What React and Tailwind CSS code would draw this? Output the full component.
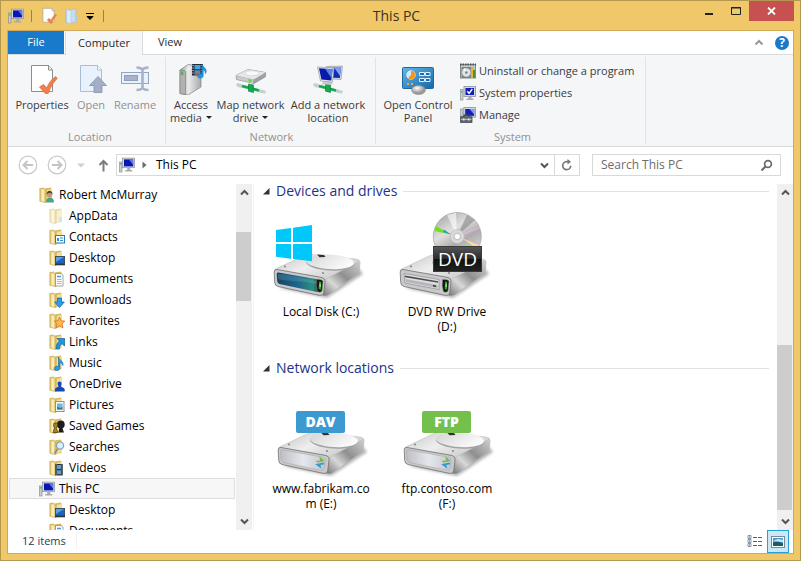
import React, { useState } from "react";

/* ---------- small icons ---------- */

function PcIcon() {
  return (
    <svg width="16" height="16" viewBox="0 0 16 16" className="shrink-0">
      <rect x="0.5" y="5" width="2.5" height="10" fill="#c9ced2" stroke="#80878c" strokeWidth="0.6" />
      <rect x="1.2" y="6" width="1.4" height="1.6" fill="#2fd02f" />
      <rect x="3.6" y="1.1" width="12" height="9.6" fill="#d5d9de" stroke="#8a9198" strokeWidth="0.7" />
      <rect x="5" y="2.4" width="9.2" height="7" fill="#0a15b4" />
      <path d="M10 2.4h4.2v5.5z" fill="#5d7bea" />
      <path d="M8.2 11h3v2h2v1.6H6.2V13h2z" fill="#a5abb1" />
    </svg>
  );
}

function SheetCheck({ size }) {
  return (
    <svg width={size} height={size} viewBox="0 0 32 32" className="shrink-0">
      <path d="M5.5 2.5h17l4 4v22h-21z" fill="#fff" stroke="#8d8d8d" />
      <path d="M22.5 2.5v4.500h4" fill="#eef0f1" stroke="#8d8d8d" />
      <path d="M13.500 24l4-2.600 3.200 3.400c2-4.700 4.600-8.400 9-11.300l1.500 1.900c-4.400 4.500-6.800 9-9 15h-3z" fill="#f07f4e" stroke="#dd6a3a" strokeWidth="0.7" />
    </svg>
  );
}

function BlueFolder() {
  return (
    <svg width="16" height="16" viewBox="0 0 16 16" className="shrink-0">
      <path d="M2 1h6.500v14H2z" fill="#a9c4e2" />
      <path d="M7.500 1.500l5.500-.5V14l-5.500 1z" fill="#c6dcf2" stroke="#9bb9da" strokeWidth="0.6" />
      <path d="M12 7l2.500-.5V14H12z" fill="#b3cce6" />
      <path d="M3.500 1.500L8 2.500v13l-4.500-1z" fill="#dbe9f8" stroke="#a9c4e2" strokeWidth="0.5" />
    </svg>
  );
}

function OpenIcon() {
  return (
    <svg width="32" height="32" viewBox="0 0 32 32">
      <path d="M5.500 2.500h17l4 4v22h-21z" fill="#e9f2fc" stroke="#a9bcd8" />
      <path d="M22.500 2.500v4.500h4" fill="#fff" stroke="#a9bcd8" />
      <path d="M23 13.500l8.500 9h-4.500v7h-8v-7h-4.500z" fill="#a2afc6" stroke="#8393b0" strokeWidth="0.8" />
    </svg>
  );
}

function RenameIcon() {
  return (
    <svg width="32" height="32" viewBox="0 0 32 32">
      <rect x="2.500" y="9.500" width="27" height="11" fill="#e9f2fc" stroke="#92a5c2" />
      <rect x="5.500" y="12.500" width="13" height="5" fill="#a7b3c8" stroke="#8fa0bd" />
      <path d="M17.500 4.500c3 0 4.500.6 6 1.800 1.500-1.200 3-1.800 6-1.800M23.500 5.500v20M17.500 27c3 0 4.500-.6 6-1.800 1.500 1.200 3 1.800 6 1.800" fill="none" stroke="#a5b2c9" strokeWidth="2.600" />
    </svg>
  );
}

function AccessMediaIcon() {
  return (
    <svg width="32" height="32" viewBox="0 0 32 32">
      <defs>
        <linearGradient id="tower" x1="0" x2="1">
          <stop offset="0" stopColor="#9a9a9a" />
          <stop offset="0.4" stopColor="#eaeaea" />
          <stop offset="1" stopColor="#a9a9a9" />
        </linearGradient>
      </defs>
      <path d="M5 7l8-5.500 13 1.500v21l-13 8-8-1.500z" fill="url(#tower)" stroke="#858585" strokeWidth="0.7" />
      <path d="M5 7l5.500.8V31.500l-5.500-1z" fill="#b2b2b2" stroke="#777" strokeWidth="0.6" />
      <path d="M10.500 7.800l10-5.800 5.500 1" fill="none" stroke="#f5f5f5" />
      <path d="M6.200 8.500l2 .3v3l-2-.3z" fill="#1f8f1f" />
      <path d="M6.700 9.200l1 .1v1.700l-1-.1z" fill="#58f058" />
      <rect x="17" y="1" width="11" height="11.500" fill="#24303a" />
      <rect x="19.500" y="2" width="6" height="4.300" fill="#42a4dd" />
      <rect x="19.500" y="7.300" width="6" height="4.300" fill="#4b90c4" />
      <path d="M19.500 11.600l3-3 3 3z" fill="#d9534a" />
      <path d="M18 2v10M27 2v10" stroke="#fff" strokeDasharray="1 1.500" />
      <path d="M27.300 1.500c1 3 4 3.600 4 6.500 0 1.200-.4 2-1 2.800.2-2.300-1-3.400-2-3.800v5.800c0 1.500-1.400 2.400-3 2.400s-2.600-.9-2.600-2 1.200-2.200 2.800-2.200c.6 0 1 .1 1.400.3z" fill="#1e9be0" stroke="#0e6ea8" strokeWidth="0.4" />
    </svg>
  );
}

// green pipe drawn below the network icons
function NetPipe() {
  return (
    <g>
      <path d="M3 22.500l10 2 14 4" stroke="#a9dcb8" strokeWidth="3" />
      <path d="M1.500 21.500l5 1M25.500 28l5 1.400" stroke="#c8cdd0" strokeWidth="3" />
      <path d="M7 23l17 4.500" stroke="#19a650" strokeWidth="2.600" />
      <path d="M13.500 21l5 1v7.500l-5-1.300z" fill="#19a650" stroke="#0c7a37" strokeWidth="0.6" />
    </g>
  );
}

function MapDriveIcon() {
  return (
    <svg width="32" height="32" viewBox="0 0 32 32">
      <NetPipe />
      <path d="M1 12.500l12-6 17.500 3v4.200L19 20.500 1.500 16.500z" fill="#9fa1a2" stroke="#8a8c8e" strokeWidth="0.7" />
      <path d="M1 12.500l12-6 17.500 3L18.500 16.500z" fill="#e6e7e8" />
      <ellipse cx="17" cy="10.300" rx="7" ry="2.500" fill="#f9f9f9" stroke="#c2c3c4" strokeWidth="0.5" />
      <path d="M1.200 13l17 3.600v3.600L1.700 16.200z" fill="#c9cacb" />
      <path d="M13.500 16l3 .7v2.200l-3-.7z" fill="#4fe01c" />
    </svg>
  );
}

function AddNetworkIcon() {
  return (
    <svg width="32" height="32" viewBox="0 0 32 32">
      <NetPipe />
      <path d="M14.500 3.500l16-.5-1.500 13.500-12-.8z" fill="#d3d8e0" stroke="#969ca5" strokeWidth="0.7" />
      <path d="M16 4.800l13-.4-1.200 10.600-10.800-.6z" fill="#1029b8" />
      <path d="M22 4.600l7-.2-1 8.600z" fill="#7fa0f2" />
      <path d="M12 18h7l2 3.500H9z" fill="#c7cbd1" />
      <path d="M5.500 4l16.500 1-1.500 14.200-12-1.200z" fill="#e3e6eb" stroke="#969ca5" strokeWidth="0.7" />
      <path d="M7 5.300l13.600 1-1.300 11.300-9.900-1z" fill="#0a1aa8" />
      <path d="M13 5.800l7.600.5-1 9z" fill="#5a80ec" />
    </svg>
  );
}

function ControlPanelIcon() {
  return (
    <svg width="34" height="32" viewBox="0 0 34 32">
      <defs>
        <linearGradient id="cp" x1="0" y1="0" x2="1" y2="1">
          <stop offset="0" stopColor="#62b7e8" />
          <stop offset="1" stopColor="#1866a8" />
        </linearGradient>
        <radialGradient id="dome" cx="0.4" cy="0.3">
          <stop offset="0" stopColor="#fff" />
          <stop offset="1" stopColor="#999" />
        </radialGradient>
      </defs>
      <rect x="1.500" y="4.500" width="31" height="21" rx="1" fill="url(#cp)" stroke="#20699f" />
      <circle cx="10" cy="12" r="4.300" fill="#cfe9f8" stroke="#fff" strokeWidth="0.6" />
      <path d="M10 12V7.700a4.300 4.300 0 0 1 0 8.600 4.300 4.300 0 0 1-3-1.300z" fill="#f7941e" />
      <path d="M18.500 9.500h5v3h-5zM24.500 9.500h4.500v3h-4.500zM18.500 15.500h5v3h-5zM24.500 15.500h4.500v3h-4.500z" fill="#1d6cb0" stroke="#dff1fb" />
      <path d="M6 20h2v2H6zM10 20h2v2h-2z" fill="#f7a54a" />
      <ellipse cx="17.500" cy="27" rx="7" ry="4.500" fill="url(#dome)" stroke="#8d8d8d" strokeWidth="0.6" />
    </svg>
  );
}

function UninstallIcon() {
  return (
    <svg width="16" height="16" viewBox="0 0 16 16">
      <rect x="0.500" y="1.500" width="15" height="13.500" fill="#c7cacc" stroke="#84898c" />
      <path d="M0 1.500h16" stroke="#4c5357" strokeWidth="2" strokeDasharray="1.500 1" />
      <path d="M8 4h6v11H8z" fill="#e8b62c" />
      <path d="M13 7h2v8h-2z" fill="#4a8f3c" />
      <rect x="1.500" y="4" width="9.500" height="11" fill="#7b8388" />
      <circle cx="6.300" cy="9.500" r="4.600" fill="#dfe3e5" stroke="#83888b" strokeWidth="0.6" />
      <path d="M6.300 9.500L3 6.300l2-1.300z" fill="#fff" />
      <circle cx="6.300" cy="9.500" r="1.300" fill="#7b8388" />
    </svg>
  );
}

function SystemPropsIcon() {
  return (
    <svg width="16" height="16" viewBox="0 0 16 16">
      <rect x="0.500" y="4.500" width="2.500" height="10.500" fill="#c9ced2" stroke="#80878c" strokeWidth="0.6" />
      <rect x="1.100" y="6" width="1.400" height="1.600" fill="#2fd02f" />
      <rect x="4" y="1.500" width="11.500" height="10" fill="#d5d9de" stroke="#8a9198" strokeWidth="0.8" />
      <rect x="5.500" y="3" width="8.500" height="7" fill="#0f1fbe" />
      <path d="M7.300 6.300l1.800 2L12.300 4" fill="none" stroke="#fff" strokeWidth="1.400" />
      <path d="M8.500 12h3v1.500h2V15h-7v-1.500h2z" fill="#a5abb1" />
    </svg>
  );
}

function ManageIcon() {
  return (
    <svg width="16" height="16" viewBox="0 0 16 16">
      <rect x="0.500" y="2" width="2.500" height="8" fill="#c9ced2" stroke="#80878c" strokeWidth="0.6" />
      <rect x="3.800" y="0.600" width="11.700" height="9.500" fill="#d5d9de" stroke="#8a9198" strokeWidth="0.8" />
      <rect x="5.200" y="2" width="9" height="6.800" fill="#0f1fbe" />
      <path d="M9.500 2h4.700v5.500z" fill="#7d9bf2" />
      <path d="M4 10V8.200h5V10" fill="none" stroke="#3f464c" strokeWidth="1.200" />
      <rect x="0.500" y="9.800" width="11.500" height="5.700" fill="#5e6870" stroke="#3b4248" strokeWidth="0.7" />
      <path d="M1 12.300h10.500" stroke="#c3c9ce" />
      <path d="M3 11.500h1.500v2H3zM8 11.500h1.500v2H8z" fill="#e4e8ea" />
    </svg>
  );
}

const badges = {
  user: (
    <g>
      <path d="M7 15.500c0-3.500 1.500-5 3.900-5s4.100 1.500 4.100 5z" fill="#4da387" />
      <circle cx="10.500" cy="7.500" r="2.900" fill="#c99a6c" />
      <path d="M7.500 7.300c0-2.300 1.300-3.500 3-3.500s3.200 1.200 3 3.500c-1.500-1.600-4-1.600-6 0z" fill="#54483c" />
    </g>
  ),
  contact: (
    <g>
      <rect x="6.500" y="6.500" width="9" height="7.500" fill="#f4fbff" stroke="#2d7fae" />
      <path d="M8 9h2v3H8z" fill="#3d8fc4" />
      <path d="M11 9h3M11 11.500h3" stroke="#3d8fc4" />
    </g>
  ),
  desktop: (
    <g>
      <rect x="6.500" y="6.500" width="9" height="7.500" fill="#1d63bd" stroke="#3c4e66" />
      <path d="M7 7h8L7 12z" fill="#5a9fe8" />
      <path d="M6 14.500h10" stroke="#2c3542" strokeWidth="1.600" />
    </g>
  ),
  doc: (
    <g>
      <path d="M6.500 2.500h5.500l2 1.500v11h-7.500z" fill="#fff" stroke="#8a8f95" strokeWidth="0.8" />
      <path d="M8 8.500h4.500M8 10.500h4.500M8 12.500h4.500" stroke="#9aa1a8" strokeWidth="0.8" />
      <path d="M8 5.500h4" stroke="#4f9be0" strokeWidth="1.600" />
    </g>
  ),
  down: <path d="M8.500 6h4v4h2.800l-4.800 5.500L5.700 10h2.800z" fill="#2a9fe8" stroke="#1467a8" strokeWidth="0.8" />,
  star: <path d="M10.500 4l1.600 3.800 3.700.3-2.800 2.700 1 4.200-3.500-2.200L7 15l1-4.200-2.800-2.700 3.800-.3z" fill="#ffb84a" stroke="#df6f22" strokeWidth="0.8" />,
  link: <path d="M8 4.500h7.500V12L13 9.700c-2 1.300-2.600 3-2.600 5.300H7.200c-.3-3.300.8-5.800 3.200-8z" fill="#1e96dc" stroke="#0d6099" strokeWidth="0.7" />,
  music: <path d="M9.500 2c.5 3 5 3.500 4.500 8.500-.8-2-2-2.900-3-3.100V13c0 1.500-1.300 2.500-3 2.500S5.200 14.700 5.200 13.500s1.300-2.200 2.800-2.200c.6 0 1 .1 1.500.3z" fill="#2a9fe8" stroke="#0e5f9c" strokeWidth="0.6" />,
  cloud: <path d="M6.500 15.500c-1.500-1-.5-3.500 1.300-4 1-.4 1.700-.8 1.700-1.500-1.500-2-1-4.500 1-4.500s2.800 2.300 1.300 4.500c0 .7.900 1.100 2 1.500 2 .7 2.500 3 1.500 4z" fill="#1549b5" />,
  picture: (
    <g>
      <rect x="6.500" y="4.500" width="8.500" height="10" fill="#f5f8fa" stroke="#8b9298" />
      <rect x="8" y="6.500" width="5.500" height="6" fill="#6fb5e6" />
      <path d="M8 12.500V9.500l3 1.500 2.500-1v2.500z" fill="#3d7f5e" />
    </g>
  ),
  games: (
    <g>
      <circle cx="11.800" cy="6.500" r="3.900" fill="#1d1d1d" />
      <path d="M10.500 9h2.500l2 5.500H9.500z" fill="#1d1d1d" />
      <path d="M5 5h3.500v3L7 10l2 4.500H4l1.500-4.500L4.500 8z" fill="#a2812f" stroke="#4a3812" strokeWidth="0.7" />
    </g>
  ),
  search: (
    <g>
      <path d="M8.800 10L5.500 14.300" stroke="#8c9299" strokeWidth="2" />
      <circle cx="11" cy="6.500" r="3.600" fill="#d8effc" stroke="#8fa3b3" strokeWidth="1.300" />
    </g>
  ),
  video: (
    <g>
      <rect x="6" y="4" width="8" height="11.500" fill="#27323b" />
      <path d="M8 5h4v4H8zM8 10.300h4v4H8z" fill="#5c9fc9" />
      <path d="M7 4.500v11M13.100 4.500v11" stroke="#fff" strokeWidth="0.8" strokeDasharray="1 1" />
    </g>
  ),
  page: <path d="M10.500 9h2v5h-2z" fill="#8fc0ea" />,
};

function FolderIcon({ badge }) {
  return (
    <svg width="16" height="16" viewBox="0 0 16 16" className="shrink-0" opacity={badge === "page" ? 0.5 : 1}>
      <path d="M5.500 1.500L12 .5l.5 1.500V14l-6 1z" fill="#d9b95c" />
      <path d="M7.500 3l4.500-1v11l-4.500 1.500z" fill="#f3e09a" />
      <path d="M.3 1L5 .4v14.800L.3 14.500z" fill="#e2c46e" />
      <path d="M1.800 1.500L7 2.500v13.200l-5.200-1.200z" fill="#f8ecb4" stroke="#caa548" strokeWidth="0.6" />
      <path d="M5.500 2.300l1.500.2v13.200l-1.500-.4z" fill="#d6b65a" />
      {badges[badge]}
    </svg>
  );
}

/* ---------- drive pictures ---------- */

function DriveBody({ id, front }) {
  return (
    <g>
      <defs>
        <linearGradient id={`${id}-top`} x1="0" y1="0" x2="1" y2="0.6">
          <stop offset="0" stopColor="#c4c4c4" />
          <stop offset="0.5" stopColor="#eeeeee" />
          <stop offset="1" stopColor="#c9c9c9" />
        </linearGradient>
        <linearGradient id={`${id}-side`} x1="0" y1="1" x2="1" y2="0">
          <stop offset="0" stopColor="#777" />
          <stop offset="0.3" stopColor="#d8d8d8" />
          <stop offset="0.55" stopColor="#8f8f8f" />
          <stop offset="1" stopColor="#d2d2d2" />
        </linearGradient>
        <linearGradient id={`${id}-plate`} x1="0" y1="0" x2="1" y2="0.4">
          <stop offset="0" stopColor="#d3d3d3" />
          <stop offset="1" stopColor="#fbfbfb" />
        </linearGradient>
        <linearGradient id={`${id}-silver`} x1="0" x2="1">
          <stop offset="0" stopColor="#bfc0c6" />
          <stop offset="0.5" stopColor="#e6e6ed" />
          <stop offset="1" stopColor="#c5c6cc" />
        </linearGradient>
        <linearGradient id={`${id}-teal`} x1="0" x2="1">
          <stop offset="0" stopColor="#16445f" />
          <stop offset="0.45" stopColor="#1d638a" />
          <stop offset="0.8" stopColor="#2c8e82" />
          <stop offset="1" stopColor="#16424a" />
        </linearGradient>
        <filter id={`${id}-soft`} x="-20%" y="-20%" width="140%" height="140%">
          <feGaussianBlur stdDeviation="1.500" />
        </filter>
      </defs>
      <path d="M6 84l48 10 36-24-6-8z" fill="#000" opacity="0.3" filter={`url(#${id}-soft)`} />
      <path d="M51 74L85 56q2.500 0 2.500 3l-1 8q-.5 2-2 3L56 90.500q-2 1.500-6 1z" fill={`url(#${id}-side)`} />
      <path d="M2.500 65L30 52q4-2 9-1.500l44 4.500q5 1 2 3L53 75q-2 1-5 .5L4 67.500q-3-1-1.500-2.500z" fill={`url(#${id}-top)`} stroke="#b5b5b5" strokeWidth="0.5" />
      <ellipse cx="57" cy="59" rx="24" ry="7.600" fill="#a3a3a3" transform="rotate(3 57 59)" />
      <ellipse cx="57" cy="57.800" rx="24" ry="7.300" fill={`url(#${id}-plate)`} transform="rotate(3 57 57.800)" />
      <path d="M44 50.500l7 .5 1.500 2-6 .3z" fill="#333" />
      <circle cx="12" cy="62.500" r="0.900" fill="#7d7d7d" />
      <circle cx="50" cy="69" r="0.900" fill="#7d7d7d" />
      <path d="M4 65.500l44 7.800q4.500.8 4 5l-1.300 10.500q-.6 3.200-4.200 2.600L5 82.500q-3-.7-3.300-4L1.200 68q0-3 2.800-2.500z" fill="#c9c9c9" stroke="#707070" strokeWidth="0.8" />
      {front === "teal" && (
        <g>
          <path d="M5.500 68.500l40 7q3 .6 2.800 3L47 86q-.5 2.500-3 2L6.500 80q-2-.5-2.300-3L3.700 70q0-2 1.800-1.500z" fill={`url(#${id}-teal)`} />
          <path d="M5 70c12 0 23 4 38 7v3C28 76 16 78 5 75z" fill="#7ab9d4" opacity="0.250" />
        </g>
      )}
      {front === "tray" && (
        <g>
          <path d="M5 69.500l35 6v10L6 79z" fill="#dedee2" stroke="#8c8c90" strokeWidth="0.7" />
          <path d="M6 71.500l33 5.700v1.600L6 73.200z" fill="#4f4f52" />
          <path d="M6.500 75l32 6v3l-31.500-6z" fill="#b5b5ba" />
          <path d="M34 81l3 .6v1.500l-3-.6z" fill="#333" />
        </g>
      )}
      {front === "silver" && (
        <path d="M5 67.800l40.500 7.400q3 .6 2.800 3L47 86.500q-.5 2.200-3 1.700L6.500 80.500q-2-.5-2.300-3L3.500 70q0-2.400 1.500-2.200z" fill={`url(#${id}-silver)`} stroke="#9b9ba0" strokeWidth="0.4" />
      )}
      {front === "silver" ? (
        <g>
          <path d="M42.500 74.500l5 4.500-7.500 1.500-1-1.800h4z" fill="#6cbd45" />
          <path d="M39 82l7.500-1.500.8 1.700-3.800.8.800 3.800-6-4.500z" fill="#3d96d0" />
        </g>
      ) : (
        <g>
          <path d="M43.500 75.500q5.500-.5 6.500 1.500l-1 10q-1.500 2-4.500.8-2-6 -1-12.300z" fill="#161616" stroke="#888" strokeWidth="0.5" />
          <path d="M46.200 77.500l2 .5-.5 8-2-1.500z" fill="#35b52e" />
          <path d="M46.600 80l1.200.2-.2 3-1-.4z" fill="#a9f79a" />
        </g>
      )}
    </g>
  );
}

function LocalDiskIcon() {
  return (
    <svg width="96" height="96" viewBox="0 0 96 96">
      <DriveBody id="c" front="teal" />
      <path d="M3 26l15-2v14H3zM20 23.700L39 21v17H20zM3 40h15v14.700L3 52.700zM20 40h19v17.300l-19-2.400z" fill="#00c8fa" />
    </svg>
  );
}

function DvdIcon() {
  return (
    <svg width="96" height="96" viewBox="0 0 96 96">
      <defs>
        <linearGradient id="disc" x1="0.2" y1="0" x2="0.8" y2="1">
          <stop offset="0" stopColor="#a9a9a9" />
          <stop offset="0.35" stopColor="#e0e0e0" />
          <stop offset="0.6" stopColor="#acacac" />
          <stop offset="1" stopColor="#e2e2e2" />
        </linearGradient>
        <linearGradient id="dvdbox" x1="0" y1="0" x2="0" y2="1">
          <stop offset="0" stopColor="#565656" />
          <stop offset="0.5" stopColor="#2b2b2b" />
          <stop offset="0.52" stopColor="#111" />
          <stop offset="1" stopColor="#222" />
        </linearGradient>
      </defs>
      <DriveBody id="d" front="tray" />
      <circle cx="58.300" cy="32.500" r="24" fill="url(#disc)" stroke="#a0a0a0" strokeWidth="0.7" />
      <path d="M58 32L48 11l9-2.200z" fill="#fff" opacity="0.6" />
      <path d="M58 32l10-21 8 5z" fill="#868686" opacity="0.6" />
      <path d="M52 30.500L35.500 27l1.500-5z" fill="#70e01f" />
      <path d="M52 30.500L44 28l1-2.500z" fill="#26a3b8" />
      <path d="M64 30l17-6.500M64 35l17 6" stroke="#eab4dc" strokeWidth="1.200" />
      <path d="M64 35l16 6.500-2 3z" fill="#f2e58a" />
      <circle cx="58.300" cy="32.500" r="7" fill="#d9d9d9" stroke="#b9b9b9" strokeWidth="0.6" />
      <circle cx="58.300" cy="32.500" r="3.200" fill="#fff" stroke="#aaa" strokeWidth="0.8" />
      <rect x="34.500" y="42.500" width="48" height="25" fill="url(#dvdbox)" stroke="#3a3a3a" />
      <text x="58.500" y="62" textAnchor="middle" fontFamily="Open Sans" fontSize="19" fill="#fff">DVD</text>
    </svg>
  );
}

function NetworkDriveIcon({ id, tag, color }) {
  return (
    <svg width="96" height="96" viewBox="0 0 96 96">
      <g transform="translate(4 1)">
        <DriveBody id={id} front="silver" />
      </g>
      <rect x="23" y="30" width="49" height="22" rx="2" fill={color} />
      <text x="47.500" y="46" textAnchor="middle" fontFamily="Open Sans" fontWeight="800" fontSize="14" fill="#fff">{tag}</text>
    </svg>
  );
}

/* ---------- window parts ---------- */

function Chevron({ dir }) {
  return (
    <svg width="9" height="7" viewBox="0 0 9 7">
      <path d={dir === "up" ? "M1 5.500L4.500 2 8 5.500" : "M1 1.500L4.500 5 8 1.500"} fill="none" stroke="#555" strokeWidth="2" />
    </svg>
  );
}

function Scrollbar({ start, size }) {
  return (
    <div className="flex w-4 shrink-0 flex-col bg-[#f0f0f0]">
      <button aria-label="Scroll up" className="flex h-[17px] items-center justify-center"><Chevron dir="up" /></button>
      <div className="min-h-0 flex-1">
        <div style={{ height: `${start}%` }} />
        <div className="w-[15px] bg-[#cdcdcd]" style={{ height: `${size}%` }} />
      </div>
      <button aria-label="Scroll down" className="flex h-[17px] items-center justify-center"><Chevron dir="down" /></button>
    </div>
  );
}

function BigButton({ icon, lines, width, disabled, menu }) {
  return (
    <button disabled={disabled} className={`flex flex-col items-center leading-[13px] ${width} ${disabled ? "text-[#919191]" : "text-[#3b3b3b]"}`}>
      <span className="mb-[3px] flex h-8 items-center">{icon}</span>
      {lines.map((line, i) => (
        <span key={line} className="flex items-center gap-1 whitespace-nowrap">
          {line}
          {menu && i === lines.length - 1 && <span className="border-x-[3px] border-t-[3px] border-x-transparent border-t-[#222]" />}
        </span>
      ))}
    </button>
  );
}

function Group({ title, children, className }) {
  return (
    <div className={`flex flex-col border-r border-[#e2e3e4] pt-[6px] ${className}`}>
      <div className="flex flex-1">{children}</div>
      <div className="text-center leading-[14px] text-[#919191]">{title}</div>
    </div>
  );
}

function Section({ title, children }) {
  return (
    <section>
      <h2 className="flex items-center pl-[5px] text-sm leading-[14px] text-[#1e3287]">
        <svg width="7" height="7" viewBox="0 0 7 7" className="mr-[6px]">
          <path d="M6.500 0v6.500H0z" fill="#333" />
        </svg>
        {title}
        <span className="ml-[6px] h-px flex-1 bg-[#e2e2e2]" />
      </h2>
      <div className="mt-[6px] flex">{children}</div>
    </section>
  );
}

function Tile({ icon, lines }) {
  return (
    <button className="flex w-[126px] flex-col items-center leading-[15px] text-black">
      {icon}
      <span className="mt-1 flex flex-col">
        {lines.map((line) => <span key={line}>{line}</span>)}
      </span>
    </button>
  );
}

const tree = [
  { name: "Robert McMurray", badge: "user", root: true },
  { name: "AppData", badge: "page" },
  { name: "Contacts", badge: "contact" },
  { name: "Desktop", badge: "desktop" },
  { name: "Documents", badge: "doc" },
  { name: "Downloads", badge: "down" },
  { name: "Favorites", badge: "star" },
  { name: "Links", badge: "link" },
  { name: "Music", badge: "music" },
  { name: "OneDrive", badge: "cloud" },
  { name: "Pictures", badge: "picture" },
  { name: "Saved Games", badge: "games" },
  { name: "Searches", badge: "search" },
  { name: "Videos", badge: "video" },
  { name: "This PC", root: true, selected: true },
  { name: "Desktop", badge: "desktop" },
  { name: "Documents", badge: "doc" },
];

export default function App() {
  const [query, setQuery] = useState("");

  return (
    <div className="flex h-screen flex-col border border-[#b5984f] bg-[#f0c869] px-[6px] pb-[6px] font-['Open_Sans',sans-serif] text-xs text-black">
      <header className="flex h-[29px] shrink-0 items-start">
        <div className="flex h-[29px] flex-1 items-center">
          <button aria-label="This PC" className="ml-px"><PcIcon /></button>
          <span className="ml-[7px] h-3 w-px bg-[#9c8144]" />
          <button aria-label="Properties" className="ml-2"><SheetCheck size={17} /></button>
          <button aria-label="New folder" className="ml-[6px]"><BlueFolder /></button>
          <button aria-label="Customize toolbar" className="ml-[7px]">
            <svg width="8" height="8" viewBox="0 0 8 8"><path d="M0 1.500h8M1 4.500h6L4 7.500z" stroke="#000" strokeWidth="1" /></svg>
          </button>
          <span className="ml-[9px] h-3 w-px bg-[#9c8144]" />
        </div>
        <h1 className="self-center pr-2 text-sm leading-5 text-[#3a3120]">This PC</h1>
        <div className="flex flex-1 justify-end">
          <button aria-label="Minimize" className="flex h-5 w-[26px] items-center justify-center">
            <svg width="10" height="10" viewBox="0 0 10 10"><path d="M1 8h8" stroke="#222" strokeWidth="2" /></svg>
          </button>
          <button aria-label="Maximize" className="flex h-5 w-[27px] items-center justify-center">
            <svg width="12" height="10" viewBox="0 0 12 10"><path d="M1.500 1.500h9v7h-9zM1 2h10" fill="none" stroke="#222" /></svg>
          </button>
          <button aria-label="Close" className="flex h-5 w-[45px] items-center justify-center bg-[#c75050]">
            <svg width="9" height="8" viewBox="0 0 9 8"><path d="M1 .5l7 7M8 .5l-7 7" stroke="#fff" strokeWidth="1.800" /></svg>
          </button>
        </div>
      </header>

      <main className="flex min-h-0 flex-1 flex-col border border-[#cfa956] bg-white">
        <nav className="flex h-6 shrink-0 border-b border-[#dadbdc] text-[11px]">
          <button className="h-[23px] w-14 bg-[#1979ca] text-white">File</button>
          <button className="-mb-px ml-px h-6 w-[78px] border-x border-[#dadbdc] bg-[#f5f6f7] text-[#2b2b2b]">Computer</button>
          <button className="w-[54px] text-[#2b2b2b]">View</button>
          <div className="flex flex-1 items-center justify-end gap-[11px] pr-1">
            <button aria-label="Collapse ribbon">
              <svg width="10" height="8" viewBox="0 0 10 8"><path d="M1.500 5.500L5 2l3.500 3.500" fill="none" stroke="#9a9a9a" strokeWidth="2" /></svg>
            </button>
            <button aria-label="Help" className="size-[14px] rounded-full bg-[#1979ca] text-xs leading-[14px] font-bold text-white">?</button>
          </div>
        </nav>

        <div className="flex h-[92px] shrink-0 border-b border-[#dadbdc] bg-[#f5f6f7] py-[2px] text-[11px] text-[#3b3b3b]">
          <Group title="Location" className="w-[158px] pl-[7px]">
            <BigButton width="w-[54px]" icon={<SheetCheck size={32} />} lines={["Properties"]} />
            <BigButton width="w-[44px]" icon={<OpenIcon />} lines={["Open"]} disabled />
            <BigButton width="w-[44px]" icon={<RenameIcon />} lines={["Rename"]} disabled />
          </Group>
          <Group title="Network" className="w-[210px] pl-[2px]">
            <BigButton width="w-[46px]" icon={<AccessMediaIcon />} lines={["Access", "media"]} menu />
            <BigButton width="w-[73px]" icon={<MapDriveIcon />} lines={["Map network", "drive"]} menu />
            <BigButton width="w-[82px]" icon={<AddNetworkIcon />} lines={["Add a network", "location"]} />
          </Group>
          <Group title="System" className="w-[270px] pl-1">
            <BigButton width="w-[76px]" icon={<ControlPanelIcon />} lines={["Open Control", "Panel"]} />
            <div className="-mt-[3px] ml-1 flex flex-col">
              <button className="flex h-[22px] items-center gap-[3px] whitespace-nowrap"><UninstallIcon />Uninstall or change a program</button>
              <button className="flex h-[22px] items-center gap-[3px]"><SystemPropsIcon />System properties</button>
              <button className="flex h-[22px] items-center gap-[3px]"><ManageIcon />Manage</button>
            </div>
          </Group>
        </div>

        <div className="flex h-[37px] shrink-0 items-center pr-3 pb-px pl-[10px]">
          <button aria-label="Back" className="mr-[9px]">
            <svg width="20" height="20" viewBox="0 0 20 20"><circle cx="10" cy="10" r="8.800" fill="none" stroke="#c9c9c9" strokeWidth="1.200" /><path d="M15 10H6M9.500 6L5.500 10l4 4" fill="none" stroke="#c4c4c4" strokeWidth="2" /></svg>
          </button>
          <button aria-label="Forward" className="mr-[10px]">
            <svg width="20" height="20" viewBox="0 0 20 20"><circle cx="10" cy="10" r="8.800" fill="none" stroke="#c9c9c9" strokeWidth="1.200" /><path d="M5 10h9M10.500 6l4 4-4 4" fill="none" stroke="#c4c4c4" strokeWidth="2" /></svg>
          </button>
          <button aria-label="Recent locations" className="mr-[13px]">
            <svg width="8" height="5" viewBox="0 0 8 5"><path d="M0 .5h8L4 4.500z" fill="#cfcfcf" /></svg>
          </button>
          <button aria-label="Up" className="mr-[7px]">
            <svg width="11" height="13" viewBox="0 0 11 13"><path d="M5.500 12.500V2M1.500 6l4-4 4 4" fill="none" stroke="#7b7b7b" strokeWidth="2" /></svg>
          </button>
          <div className="flex h-[22px] flex-1 items-stretch border border-[#d9d9d9]">
            <div className="flex flex-1 items-center pl-[2px]">
              <PcIcon />
              <svg width="5" height="8" viewBox="0 0 5 8" className="mr-[9px] ml-[7px]"><path d="M.5.500L4.500 4 .500 7.500z" fill="#6b6b6b" /></svg>
              This PC
            </div>
            <button aria-label="Previous locations" className="px-[5px]"><Chevron dir="down" /></button>
            <button aria-label="Refresh" className="flex w-[25px] items-center justify-center border-l border-[#d9d9d9]">
              <svg width="12" height="12" viewBox="0 0 12 12"><path d="M7 2.700H5.500a4 4 0 1 0 4.200 4" fill="none" stroke="#777" strokeWidth="1.700" /><path d="M6.500 0v5.500L10 2.700z" fill="#777" /></svg>
            </button>
          </div>
          <div className="ml-3 flex h-[22px] w-[189px] items-center border border-[#d9d9d9] pr-[7px] pl-2">
            <input
              type="text"
              aria-label="Search This PC"
              placeholder="Search This PC"
              value={query}
              onChange={(e) => setQuery(e.target.value)}
              className="min-w-0 flex-1 outline-none placeholder:text-[#6d6d6d]"
            />
            <svg width="13" height="13" viewBox="0 0 13 13"><circle cx="8" cy="5" r="3.400" fill="none" stroke="#6b6b6b" strokeWidth="1.700" /><path d="M5.500 7.500L1.500 11.500" stroke="#6b6b6b" strokeWidth="2.200" /></svg>
          </div>
        </div>

        <div className="flex min-h-0 flex-1">
          <aside className="flex w-[246px] shrink-0 border-r border-[#f5f5f5] pr-px">
            <ul className="min-w-0 flex-1 overflow-hidden pr-px pl-px">
              {tree.map((item, i) => (
                <li key={i}>
                  <button
                    className={`flex h-[21px] w-full items-center gap-1 border ${item.root ? "pl-[29px]" : "pl-[39px]"} ${item.selected ? "border-[#dedede] bg-[#f7f7f7]" : "border-transparent"}`}
                  >
                    {item.badge ? <FolderIcon badge={item.badge} /> : <PcIcon />}
                    {item.name}
                  </button>
                </li>
              ))}
            </ul>
            <Scrollbar start={10} size={22} />
          </aside>

          <div className="flex min-w-0 flex-1 flex-col gap-[27px] pr-2 pl-1">
            <Section title="Devices and drives">
              <Tile icon={<LocalDiskIcon />} lines={["Local Disk (C:)"]} />
              <Tile icon={<DvdIcon />} lines={["DVD RW Drive", "(D:)"]} />
            </Section>
            <Section title="Network locations">
              <Tile icon={<NetworkDriveIcon id="e" tag="DAV" color="#3d9ad1" />} lines={["www.fabrikam.co", "m (E:)"]} />
              <Tile icon={<NetworkDriveIcon id="f" tag="FTP" color="#73c04d" />} lines={["ftp.contoso.com", "(F:)"]} />
            </Section>
          </div>
          <Scrollbar start={46} size={53} />
        </div>

        <footer className="flex h-[23px] shrink-0 items-center pl-[14px] text-[11px] text-[#1e395b]">
          <span className="border-r border-[#f0f0f0] pr-[10px]">12 items</span>
          <div className="ml-auto flex items-center gap-1 pr-1">
            <button aria-label="Details view">
              <svg width="16" height="13" viewBox="0 0 16 13">
                <path d="M1 .5h3v3H1zM1 4.500h3v3H1zM1 8.500h3v3H1z" fill="#fff" stroke="#8897a5" />
                <path d="M2 2h1" stroke="#2a7a3a" /><path d="M2 6h1" stroke="#d22" /><path d="M2 10h1" stroke="#2255bb" />
                <path d="M6 2.500h4M11 2.500h4M6 6.500h4M11 6.500h4M6 10.500h4M11 10.500h4" stroke="#4f6577" />
              </svg>
            </button>
            <button aria-label="Large icons view" className="flex h-[23px] w-[22px] items-center justify-center border border-[#26a0da] bg-[#cbe8f6]">
              <svg width="14" height="12" viewBox="0 0 14 12">
                <rect x="0.500" y="0.500" width="13" height="11" fill="#fff" stroke="#7d8a94" />
                <rect x="2" y="2" width="10" height="8" fill="#4a9bd6" />
                <path d="M2 6.500l5-1 5 2V10H2z" fill="#1d5a68" />
                <path d="M2 5l5-2 5 1v2z" fill="#c9e9fa" />
              </svg>
            </button>
          </div>
        </footer>
      </main>
    </div>
  );
}
